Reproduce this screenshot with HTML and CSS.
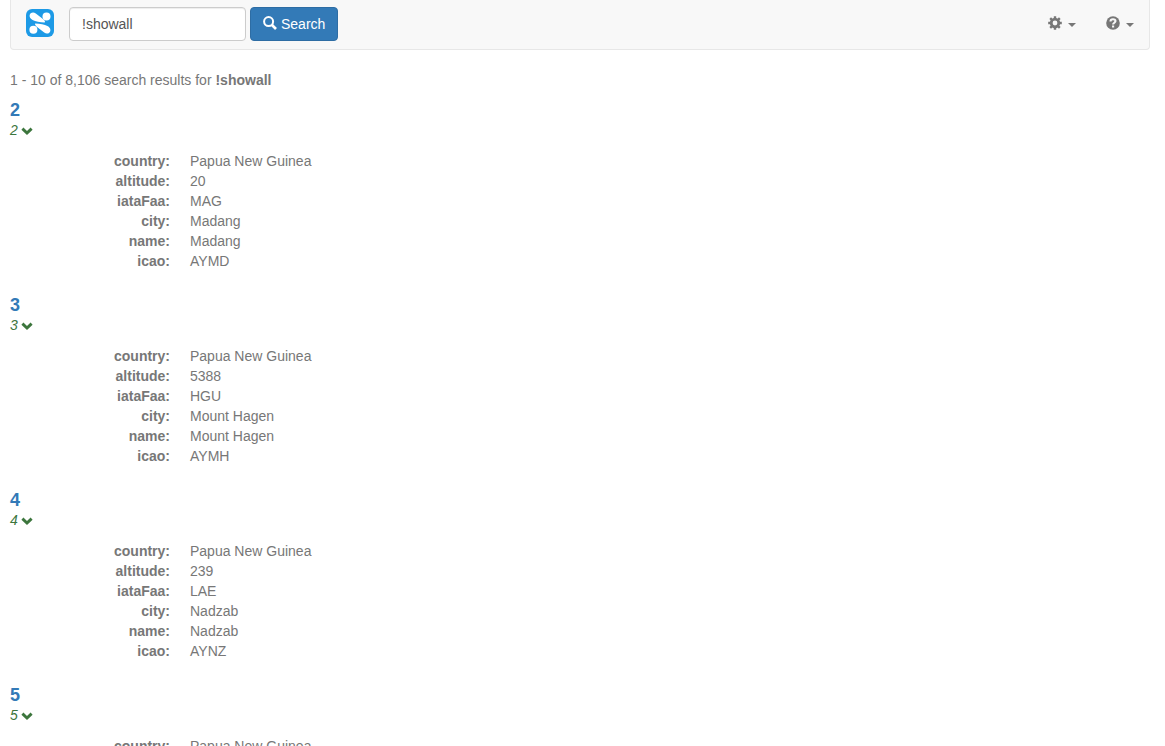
FILE: index.html
```
<!DOCTYPE html>
<html lang="en">
<head>
<meta charset="utf-8">
<title>Search results</title>
<link rel="stylesheet" href="styles.css">
</head>
<body>
<svg class="sprite" aria-hidden="true">
  <symbol id="chevron" viewBox="0 0 12 8"><path d="M0.4 2.7 L2.4 0.6 L6 3.9 L9.6 0.6 L11.6 2.7 L6 8 Z"/></symbol>
</svg>
<header class="navbar">
  <a class="brand" href="#" aria-label="Home">
    <svg class="logo" viewBox="0 0 28 28" aria-hidden="true">
      <rect width="28" height="28" rx="6" fill="#1d9ae6"/>
      <g fill="#fff">
        <circle cx="20.5" cy="7.4" r="4"/>
        <circle cx="7.4" cy="20.7" r="4"/>
        <path d="M3.6 6.6 C3.8 3.6 7.2 2.6 9.8 4.4 L17.6 10.6 C19 12 19.4 13.2 18.6 13.4 C14 13.2 9.4 12.4 6.6 11 C4.6 10 3.4 8.4 3.6 6.6 Z"/>
        <path d="M24.4 21.4 C24.2 24.4 20.8 25.4 18.2 23.6 L10.4 17.4 C9 16 8.6 14.8 9.4 14.6 C14 14.8 18.6 15.6 21.4 17 C23.4 18 24.6 19.6 24.4 21.4 Z"/>
      </g>
    </svg>
  </a>
  <form class="search">
    <input class="query" type="text" value="!showall" aria-label="Search query">
    <button class="submit" type="button">
      <svg class="icon" viewBox="0 0 14 14" aria-hidden="true"><circle cx="5.6" cy="5.6" r="4.5" fill="none" stroke="currentColor" stroke-width="2"/><path d="M9 9 L13 13" stroke="currentColor" stroke-width="2.6" stroke-linecap="butt"/></svg>
      Search
    </button>
  </form>
  <nav class="menus">
    <button class="menu" type="button" aria-label="Settings">
      <svg class="icon" viewBox="0 0 14 14" aria-hidden="true"><g fill="none" stroke="currentColor"><circle cx="7" cy="7" r="3.8" stroke-width="2.8"/><path d="M7 0.2V3M7 11V13.8M0.2 7H3M11 7H13.8M2.2 2.2L4 4M10 10L11.8 11.8M2.2 11.8L4 10M10 4L11.8 2.2" stroke-width="2.4"/></g></svg>
      <span class="caret"></span>
    </button>
    <button class="menu" type="button" aria-label="Help">
      <svg class="icon" viewBox="0 0 14 14" aria-hidden="true"><circle cx="7" cy="7" r="6.8" fill="currentColor"/><path d="M4.5 5.4 C4.5 2.5 9.5 2.5 9.5 5.1 C9.5 6.8 7.1 6.7 7.1 8.6 M7.1 9.4V11.5" fill="none" stroke="#f8f8f8" stroke-width="2.1"/></svg>
      <span class="caret"></span>
    </button>
  </nav>
</header>
<main class="results">
  <p class="summary">1 - 10 of 8,106 search results for <strong>!showall</strong></p>
  <article class="result">
    <h4 class="title"><a href="#">2</a></h4>
    <div class="uri"><em>2</em><svg class="chevron" aria-hidden="true"><use href="#chevron"/></svg></div>
    <dl class="fields">
      <dt>country:</dt><dd>Papua New Guinea</dd>
      <dt>altitude:</dt><dd>20</dd>
      <dt>iataFaa:</dt><dd>MAG</dd>
      <dt>city:</dt><dd>Madang</dd>
      <dt>name:</dt><dd>Madang</dd>
      <dt>icao:</dt><dd>AYMD</dd>
    </dl>
  </article>
  <article class="result">
    <h4 class="title"><a href="#">3</a></h4>
    <div class="uri"><em>3</em><svg class="chevron" aria-hidden="true"><use href="#chevron"/></svg></div>
    <dl class="fields">
      <dt>country:</dt><dd>Papua New Guinea</dd>
      <dt>altitude:</dt><dd>5388</dd>
      <dt>iataFaa:</dt><dd>HGU</dd>
      <dt>city:</dt><dd>Mount Hagen</dd>
      <dt>name:</dt><dd>Mount Hagen</dd>
      <dt>icao:</dt><dd>AYMH</dd>
    </dl>
  </article>
  <article class="result">
    <h4 class="title"><a href="#">4</a></h4>
    <div class="uri"><em>4</em><svg class="chevron" aria-hidden="true"><use href="#chevron"/></svg></div>
    <dl class="fields">
      <dt>country:</dt><dd>Papua New Guinea</dd>
      <dt>altitude:</dt><dd>239</dd>
      <dt>iataFaa:</dt><dd>LAE</dd>
      <dt>city:</dt><dd>Nadzab</dd>
      <dt>name:</dt><dd>Nadzab</dd>
      <dt>icao:</dt><dd>AYNZ</dd>
    </dl>
  </article>
  <article class="result">
    <h4 class="title"><a href="#">5</a></h4>
    <div class="uri"><em>5</em><svg class="chevron" aria-hidden="true"><use href="#chevron"/></svg></div>
    <dl class="fields">
      <dt>country:</dt><dd>Papua New Guinea</dd>
    </dl>
  </article>
</main>
</body>
</html>
```
FILE: styles.css
```
* { box-sizing: border-box; }
body {
  display: flex;
  flex-direction: column;
  height: 100vh;
  margin: 0;
  padding: 0 15px 0 10px;
  overflow: hidden;
  background: #fff;
  color: #777;
  font: 14px/20px "Helvetica Neue", Helvetica, "Liberation Sans", Arial, sans-serif;
}
.sprite { display: none; }
.navbar {
  display: flex;
  flex: none;
  align-items: center;
  padding: 7px 15px 8px;
  background: #f8f8f8;
  border: 1px solid #e7e7e7;
  border-top: 0;
  border-radius: 0 0 4px 4px;
}
.brand { display: flex; margin: 0 15px 2px 0; }
.logo { width: 28px; height: 28px; }
.search { display: flex; gap: 4px; }
.query {
  width: 177px;
  height: 34px;
  padding: 6px 12px;
  background: #fff;
  border: 1px solid #ccc;
  border-radius: 4px;
  box-shadow: inset 0 1px 1px rgba(0, 0, 0, .075);
  color: #555;
  font: inherit;
}
.submit {
  display: flex;
  align-items: center;
  gap: 4px;
  height: 34px;
  padding: 0 12px;
  background: #337ab7;
  border: 1px solid #2e6da4;
  border-radius: 4px;
  color: #fff;
  font: inherit;
}
.icon { width: 14px; height: 14px; margin-bottom: 2px; }
.menus { display: flex; gap: 30px; margin-left: auto; }
.menu {
  display: flex;
  align-items: center;
  gap: 6px;
  padding: 0;
  background: none;
  border: 0;
  color: #777;
}
.caret {
  margin-top: 2px;
  border-top: 4px solid;
  border-right: 4px solid transparent;
  border-left: 4px solid transparent;
}
.results { padding-top: 20px; }
.summary { margin: 0 0 10px; }
.result { margin-bottom: 24px; }
.title { margin: 0; font-size: 18px; font-weight: 700; line-height: 20px; }
.title a { color: #337ab7; text-decoration: none; }
.uri { display: flex; align-items: center; gap: 3px; color: #3c763d; }
.chevron { width: 12px; height: 8px; margin-top: 1px; fill: currentColor; }
.fields {
  display: grid;
  grid-template-columns: 160px 1fr;
  column-gap: 20px;
  margin: 11px 0 0;
}
.fields dt { font-weight: 700; text-align: right; }
.fields dd { margin: 0; }
```
